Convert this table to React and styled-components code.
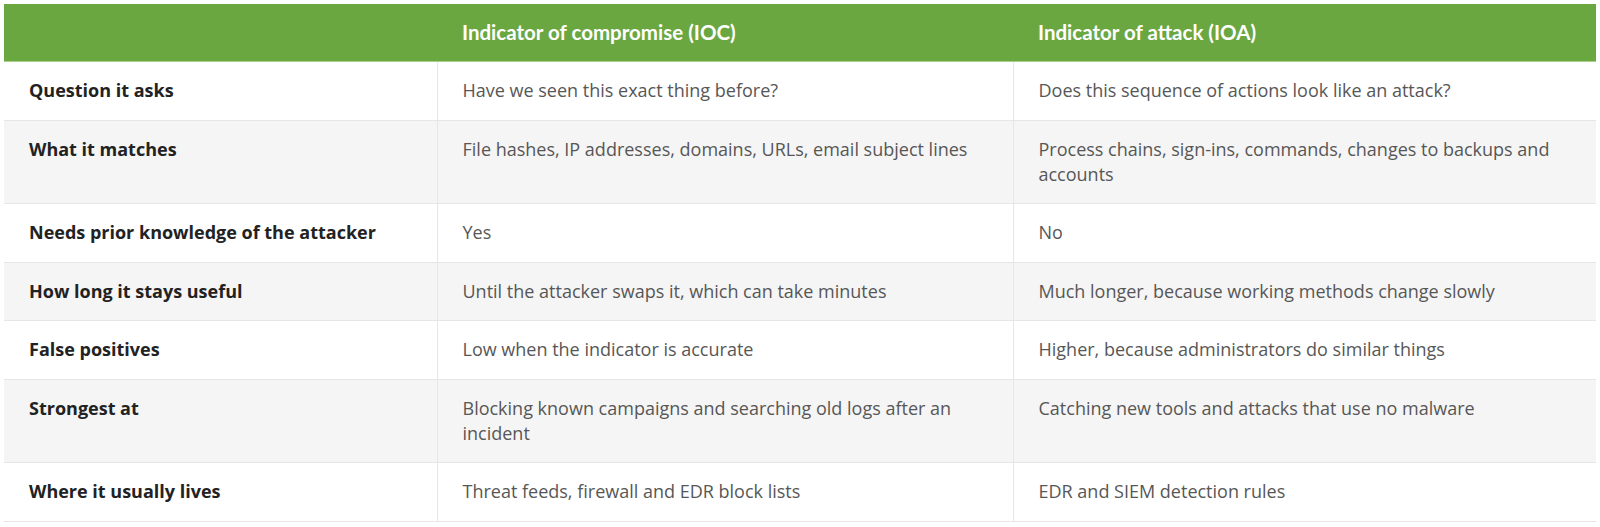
import React from 'react'
import styled, { createGlobalStyle } from 'styled-components'

const GlobalStyle = createGlobalStyle`
  body {
    margin: 0;
    padding: 4px;
    background: #fff;
    font-family: "Open Sans", "Liberation Sans", sans-serif;
  }
`

const Table = styled.table`
  width: 1592px;
  border-collapse: collapse;
  table-layout: fixed;
  font-size: 18px;
  line-height: 25px;
`

const HeadCell = styled.th`
  background: #6ba741;
  color: #fff;
  text-align: left;
  font-family: "Lato", "Open Sans", sans-serif;
  font-weight: 700;
  font-size: 20.5px;
  height: 57px;
  padding: 0 25px;
  border-bottom: 1px solid #a9cf8e;
`

const Row = styled.tr`
  background: ${p => (p.striped ? '#f5f5f5' : '#fff')};
  border-bottom: 1px solid #e6e6e6;
`

const Cell = styled.td`
  padding: 16px 25px 16.5px;
  vertical-align: top;
  color: ${p => (p.label ? '#222' : '#575757')};
  font-weight: ${p => (p.label ? 700 : 400)};
  border-left: ${p => (p.label ? 'none' : '1px solid #e6e6e6')};
`

const rows = [
  ['Question it asks', 'Have we seen this exact thing before?', 'Does this sequence of actions look like an attack?'],
  ['What it matches', 'File hashes, IP addresses, domains, URLs, email subject lines', 'Process chains, sign-ins, commands, changes to backups and accounts'],
  ['Needs prior knowledge of the attacker', 'Yes', 'No'],
  ['How long it stays useful', 'Until the attacker swaps it, which can take minutes', 'Much longer, because working methods change slowly'],
  ['False positives', 'Low when the indicator is accurate', 'Higher, because administrators do similar things'],
  ['Strongest at', 'Blocking known campaigns and searching old logs after an incident', 'Catching new tools and attacks that use no malware'],
  ['Where it usually lives', 'Threat feeds, firewall and EDR block lists', 'EDR and SIEM detection rules'],
]

export default function App() {
  return (
    <>
      <GlobalStyle />
      <Table>
        <colgroup>
          <col style={{ width: 433 }} />
          <col style={{ width: 576 }} />
          <col style={{ width: 583 }} />
        </colgroup>
        <thead>
          <tr>
            <HeadCell></HeadCell>
            <HeadCell>Indicator of compromise (IOC)</HeadCell>
            <HeadCell>Indicator of attack (IOA)</HeadCell>
          </tr>
        </thead>
        <tbody>
          {rows.map((r, i) => (
            <Row key={r[0]} striped={i % 2 === 1}>
              <Cell label>{r[0]}</Cell>
              <Cell>{r[1]}</Cell>
              <Cell>{r[2]}</Cell>
            </Row>
          ))}
        </tbody>
      </Table>
    </>
  )
}
